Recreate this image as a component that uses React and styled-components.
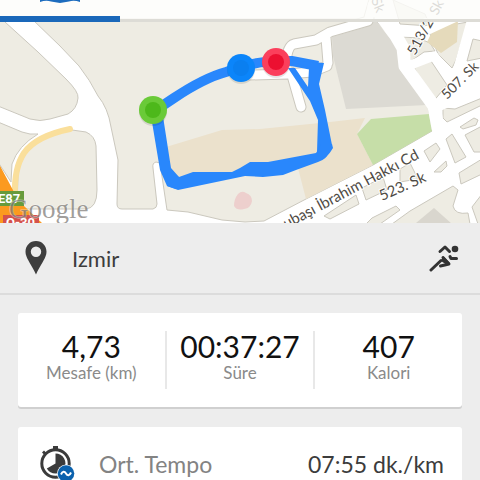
import styled, { createGlobalStyle } from "styled-components";

const stats = [
  { label: "Mesafe (km)", value: "4,73" },
  { label: "Süre", value: "00:37:27" },
  { label: "Kalori", value: "407" },
];

const tabs = ["Harita", "Grafik", "Turlar", "Detaylar"];

const blocks = [
  "M-2 15 L5 22 L38 52 L66 79 Q79 92 78 98 Q77 109 68 114 L50 119 Q40 122 30 119 L-2 106 Z",
  "M-2 122 L22 132 Q30 135 38 134 Q18 146 12 164 L11 182 L-2 162 Z",
  "M72 130 L86 132 Q95 136 96 146 L97 190 Q97 208 86 209 L17 209 L18 175 Q20 150 45 137 Z",
  "M32 19 L60 46 L79 66 Q90 80 98 96 Q108 108 111 127 L118 160 L117 204 Q117 209 122 209 L153 209 Q157 208 157 204 L153 168 Q152 163 156 162 L160 163 L167 210 L188 212 L222 220 L245 222 L264 221 L306 199 L373 165 L432 131 L428 104 L399 66 L396 42 L374 19 Z",
  "M403 37 L418 38 L430 43 L435 51 L424 52 L411 61 Z",
  "M430 34 L434 28 L468 22 L456 60 L452 68 L438 54 Z",
  "M414 67 L431 61 L447 85 L432 103 Z",
  "M473 39 L482 41 L482 58 L467 61 Z",
  "M443 118 L443 108 L455 109 L482 98 L482 105 L447 122 Z",
  "M393 0 L400 24 L430 26 L425 14 Z",
  "M460 127 L474 118 L478 120 L476 125 L463 129 Z",
  "M424 151 L436 143 L440 149 L430 162 Z",
  "M446 139 L452 134 L466 157 L455 163 Z",
  "M465 135 L482 126 L482 152 L474 152 Z",
  "M434 172 L446 161 L447 166 L441 172 Z",
  "M459 173 L482 159 L482 174 L461 184 Z",
  "M400 169 L410 163 L418 179 L400 182 Z",
  "M362 188 L383 177 L387 190 L366 200 Z",
  "M324 216 L356 195 L359 204 L330 219 Z",
  "M366 224 L372 218 L396 206 L400 210 L380 224 Z",
  "M392 224 L410 211 L453 186 L458 190 L453 206 Q455 215 468 213 L470 224 Z",
  "M472 207 L482 194 L482 224 L478 224 Z",
];

const sideStreets =
  "M250 75 L288 74 L312 72 L327 66 M286 68 Q286 46 294 44 L316 40 L330 32 L368 21 L374 0 M291 72 L301 107 M326 38 L328 63";

const markers = [
  { x: 153, y: 110, outer: "#6aca38", inner: "#4db81b" },
  { x: 241, y: 68, outer: "#0b85fa", inner: "#0a7ff0" },
  { x: 276, y: 62, outer: "#fb3f5c", inner: "#ec1031" },
];

const RouteMap = () => (
  <MapDrawing
    viewBox="0 0 480 223"
    preserveAspectRatio="xMidYMid slice"
    role="img"
    aria-label="Koşu rotası"
  >
    <rect width="480" height="223" fill="#fff" />
    <g fill="#eeece3" stroke="#cbc8be" strokeWidth="1">
      {blocks.map((d) => (
        <path key={d} d={d} />
      ))}
    </g>

    {/* land use */}
    <path
      d="M166 147 L222 130 L260 129 L330 122 L365 118 L357 134 L373 165 L306 199 L298 168 L180 178 L168 176 Z"
      fill="#ebe1cc"
    />
    <path d="M357 134 L371 119 L429 114 L432 131 L373 165 Z" fill="#c6dea8" />
    <path
      d="M332 37 L366 27 L373 17 L388 36 L399 46 L400 70 L427 105 L346 109 L333 56 Z"
      fill="#dcdad3"
    />
    <path d="M434 28 L458 20 L457 42 L441 53 L427 42 Z" fill="#e5dabb" />
    <path d="M416 223 L434 208 L452 224 Z" fill="#d9d6ce" />
    <path
      d="M238 194 Q242 190 246 193 Q252 195 252 201 Q251 208 244 209 Q237 211 234 206 Q234 199 238 194 Z"
      fill="#edcfcd"
    />

    {/* small streets */}
    <g fill="none" strokeLinecap="round" strokeLinejoin="round">
      <path d={sideStreets} stroke="#cbc8be" strokeWidth="11" />
      <path d={sideStreets} stroke="#fff" strokeWidth="9" />
      <path
        d="M374 6 L396 36 L403 48 L405 66 L434 106 L438 128"
        stroke="#fff"
        strokeWidth="13"
      />
      <path
        d="M408 66 L434 56 L450 78 M396 32 L424 32 L480 6 M471 22 L458 68 M440 106 L482 88"
        stroke="#fff"
        strokeWidth="9"
      />
      <path
        d="M70 129 Q36 136 24 153 Q14 168 15 195"
        stroke="#fadf9b"
        strokeWidth="6"
      />
    </g>
    <path d="M-1 164 L14 192 L24 206 L42 223 L-1 223 Z" fill="#fb9a1f" />

    {/* route */}
    <path
      d="M153 112 L174 98 Q204 78 226 72 L241 67 Q262 60 292 61 L318 66"
      fill="none"
      stroke="#2987fc"
      strokeWidth="10"
    />
    <g fill="#2987fc">
      <path d="M288 60 L324 63 L319 84 L325 110 L332 145 L326 157 L317 152 L318 120 L310 101 L288 68 L295 68 L308 87 L309 68 Z" />
      <path d="M150 110 L162 110 L171 168 L179 177 L176 189 L167 186 L160 170 Z" />
      <path d="M168 172 L179 177 L193 172 L232 172 L240 168 L250 162 L268 162 L316 153 Q320 148 321 144 L332 144 L333 148 Q326 160 318 162 L296 170 L283 175 L263 177 L245 176 L178 190 L167 186 Z" />
    </g>

    {markers.map((m) => (
      <g key={m.outer}>
        <circle cx={m.x} cy={m.y + 2} r="14" fill="#000" opacity="0.1" />
        <circle cx={m.x} cy={m.y} r="14" fill={m.outer} />
        <circle cx={m.x} cy={m.y} r="8" fill={m.inner} />
      </g>
    ))}

    <StreetName fontSize="15" textAnchor="end" transform="translate(420 158) rotate(-28)">
      ubaşı İbrahim Hakkı Cd
    </StreetName>
    <StreetName fontSize="15" transform="translate(382 201) rotate(-24)">
      523. Sk
    </StreetName>
    <StreetName fontSize="14" transform="translate(447 100) rotate(-45)">
      507. Sk
    </StreetName>
    <StreetName fontSize="14" transform="translate(415 56) rotate(-61)">
      513/2. Sk
    </StreetName>
    <StreetName fontSize="14" transform="translate(371 0) rotate(68)">
      Sk
    </StreetName>

    <rect x="-2" y="191" width="26" height="15" fill="#679b3c" />
    <BadgeText x="-2" y="203">E87</BadgeText>
    <rect x="3" y="215" width="36" height="14" fill="#d4524c" />
    <BadgeText x="6" y="227">O-30</BadgeText>
    <Watermark x="9" y="218">Google</Watermark>
  </MapDrawing>
);

const PinIcon = () => (
  <svg width="22" height="34" viewBox="0 0 22 34" aria-hidden="true">
    <path
      d="M11 0 C4.800 0 0.500 4.800 0.500 10.700 C0.500 17 6 22.500 11 33.500 C16 22.500 21.500 17 21.500 10.700 C21.500 4.800 17.200 0 11 0 Z M11 5.500 A5.200 5.200 0 1 1 11 15.900 A5.200 5.200 0 1 1 11 5.500 Z"
      fill="#3e3e3e"
      fillRule="evenodd"
    />
  </svg>
);

const RunnerIcon = () => (
  <svg width="32" height="28" viewBox="0 0 32 28" role="img" aria-label="Koşu">
    <circle cx="27" cy="5" r="3.300" fill="#333" />
    <g
      fill="none"
      stroke="#333"
      strokeWidth="3"
      strokeLinecap="round"
      strokeLinejoin="round"
    >
      <path d="M12 7.500 L17 3 L21.500 7.500" />
      <path d="M22 12.500 L23 14.500 H28.500" />
      <path d="M3 26 L13 16.500" />
      <path d="M15 13.500 L21 20 L12.500 22" />
    </g>
    <path d="M15 12 L22 19 L19 21 L13 17 Z" fill="#333" />
  </svg>
);

const PaceIcon = () => (
  <svg width="36" height="36" viewBox="0 0 36 36" aria-hidden="true">
    <rect x="14" y="0" width="5" height="5" fill="#3b3b3b" />
    <path d="M3 6.500 L5 4.500 L8 7.500 L6 9.500 Z" fill="#3b3b3b" />
    <circle cx="16.500" cy="17.500" r="13.700" fill="#fff" stroke="#3b3b3b" strokeWidth="3" />
    <path
      d="M16.500 17.500 V7.500 A10 10 0 1 1 7.800 22.500 Z"
      fill="#3b3b3b"
    />
    <circle cx="27" cy="27.500" r="9" fill="#fff" />
    <circle cx="27" cy="27.500" r="8.300" fill="#0b62ae" />
    <path
      d="M22 28.500 C23.500 25 25.500 25 27 27.500 S30.500 30 32 26.500"
      fill="none"
      stroke="#fff"
      strokeWidth="2"
    />
  </svg>
);

const App = () => (
  <Screen>
    <GlobalStyle />
    <MapSection>
      <RouteMap />
      <TabBar aria-label="Görünümler">
        {tabs.map((tab, i) => (
          <Tab key={tab} type="button" aria-label={tab} $active={i === 0}>
            {i === 0 && (
              <svg width="40" height="3" viewBox="0 0 40 3" aria-hidden="true">
                <path
                  d="M0 0 H40 V2 Q34 0 29 1.500 L20 3 L11 1.500 Q6 0 0 2 Z"
                  fill="#1c6cbe"
                />
              </svg>
            )}
          </Tab>
        ))}
      </TabBar>
    </MapSection>

    <LocationRow>
      <PinIcon />
      <LocationName>Izmir</LocationName>
      <RunnerIcon />
    </LocationRow>

    <Content>
      <StatsCard>
        {stats.map((stat) => (
          <Stat key={stat.label}>
            <StatLabel>{stat.label}</StatLabel>
            <StatValue>{stat.value}</StatValue>
          </Stat>
        ))}
      </StatsCard>

      <DetailCard>
        <PaceIcon />
        <DetailLabel>Ort. Tempo</DetailLabel>
        <DetailValue>07:55 dk./km</DetailValue>
      </DetailCard>
    </Content>
  </Screen>
);

const GlobalStyle = createGlobalStyle`
  * {
    box-sizing: border-box;
  }

  body {
    margin: 0;
    background: #ededed;
    font-family: Lato, "Open Sans", sans-serif;
  }
`;

const Screen = styled.main`
  height: 100vh;
  overflow-y: auto;
  scrollbar-width: none;
  background: #ededed;
`;

const MapSection = styled.section`
  position: relative;
  height: 223px;
  overflow: hidden;
`;

const MapDrawing = styled.svg`
  display: block;
  width: 100%;
  height: 100%;
`;

const StreetName = styled.text`
  fill: #4f4b45;
  stroke: #fff;
  stroke-width: 2px;
  paint-order: stroke;
`;

const BadgeText = styled.text`
  fill: #fff;
  font-family: Roboto, sans-serif;
  font-size: 13px;
  font-weight: 700;
`;

const Watermark = styled.text`
  fill: #77736f;
  fill-opacity: 0.7;
  stroke: #fff;
  stroke-opacity: 0.5;
  stroke-width: 1px;
  paint-order: stroke;
  font-family: "Liberation Serif", serif;
  font-size: 27px;
`;

const TabBar = styled.nav`
  position: absolute;
  top: 0;
  left: 0;
  right: 0;
  display: flex;
`;

const Tab = styled.button`
  flex: 1;
  display: flex;
  justify-content: center;
  align-items: flex-start;
  height: 22px;
  padding: 0;
  border: 0;
  border-bottom: ${(props) =>
    props.$active ? "6px solid #1a68ba" : "3px solid #dddcd6"};
  background: rgba(253, 253, 250, 0.82);
`;

const LocationRow = styled.section`
  display: flex;
  align-items: center;
  gap: 25px;
  height: 72px;
  padding: 0 20px 0 25px;
  border-bottom: 2px solid #dcdcdc;
`;

const LocationName = styled.h1`
  flex: 1;
  margin: 0;
  color: #3c3c3c;
  font-size: 22px;
  font-weight: 400;
`;

const Content = styled.div`
  display: flex;
  flex-direction: column;
  gap: 20px;
  padding: 18px;
`;

const Card = styled.section`
  border-radius: 3px;
  background: #fff;
  box-shadow: 0 2px 0 #d0d0d0;
`;

const StatsCard = styled(Card).attrs({ as: "dl" })`
  display: flex;
  margin: 0;
  padding: 18px 0;
`;

const Stat = styled.div`
  flex: 1;
  display: flex;
  flex-direction: column-reverse;
  justify-content: flex-end;
  height: 58px;
  text-align: center;

  & + & {
    border-left: 2px solid #e8e8e8;
  }
`;

const StatLabel = styled.dt`
  color: #8a8a8a;
  font-size: 17px;
  line-height: 22px;
`;

const StatValue = styled.dd`
  margin: 0;
  color: #111;
  font-size: 30px;
  line-height: 31px;
`;

const DetailCard = styled(Card)`
  display: flex;
  align-items: center;
  padding: 19px 18px 19px 21px;
`;

const DetailLabel = styled.span`
  flex: 1;
  margin-left: 24px;
  color: #838383;
  font-size: 23px;
`;

const DetailValue = styled.span`
  color: #3c3c3c;
  font-size: 23px;
`;

export default App;
